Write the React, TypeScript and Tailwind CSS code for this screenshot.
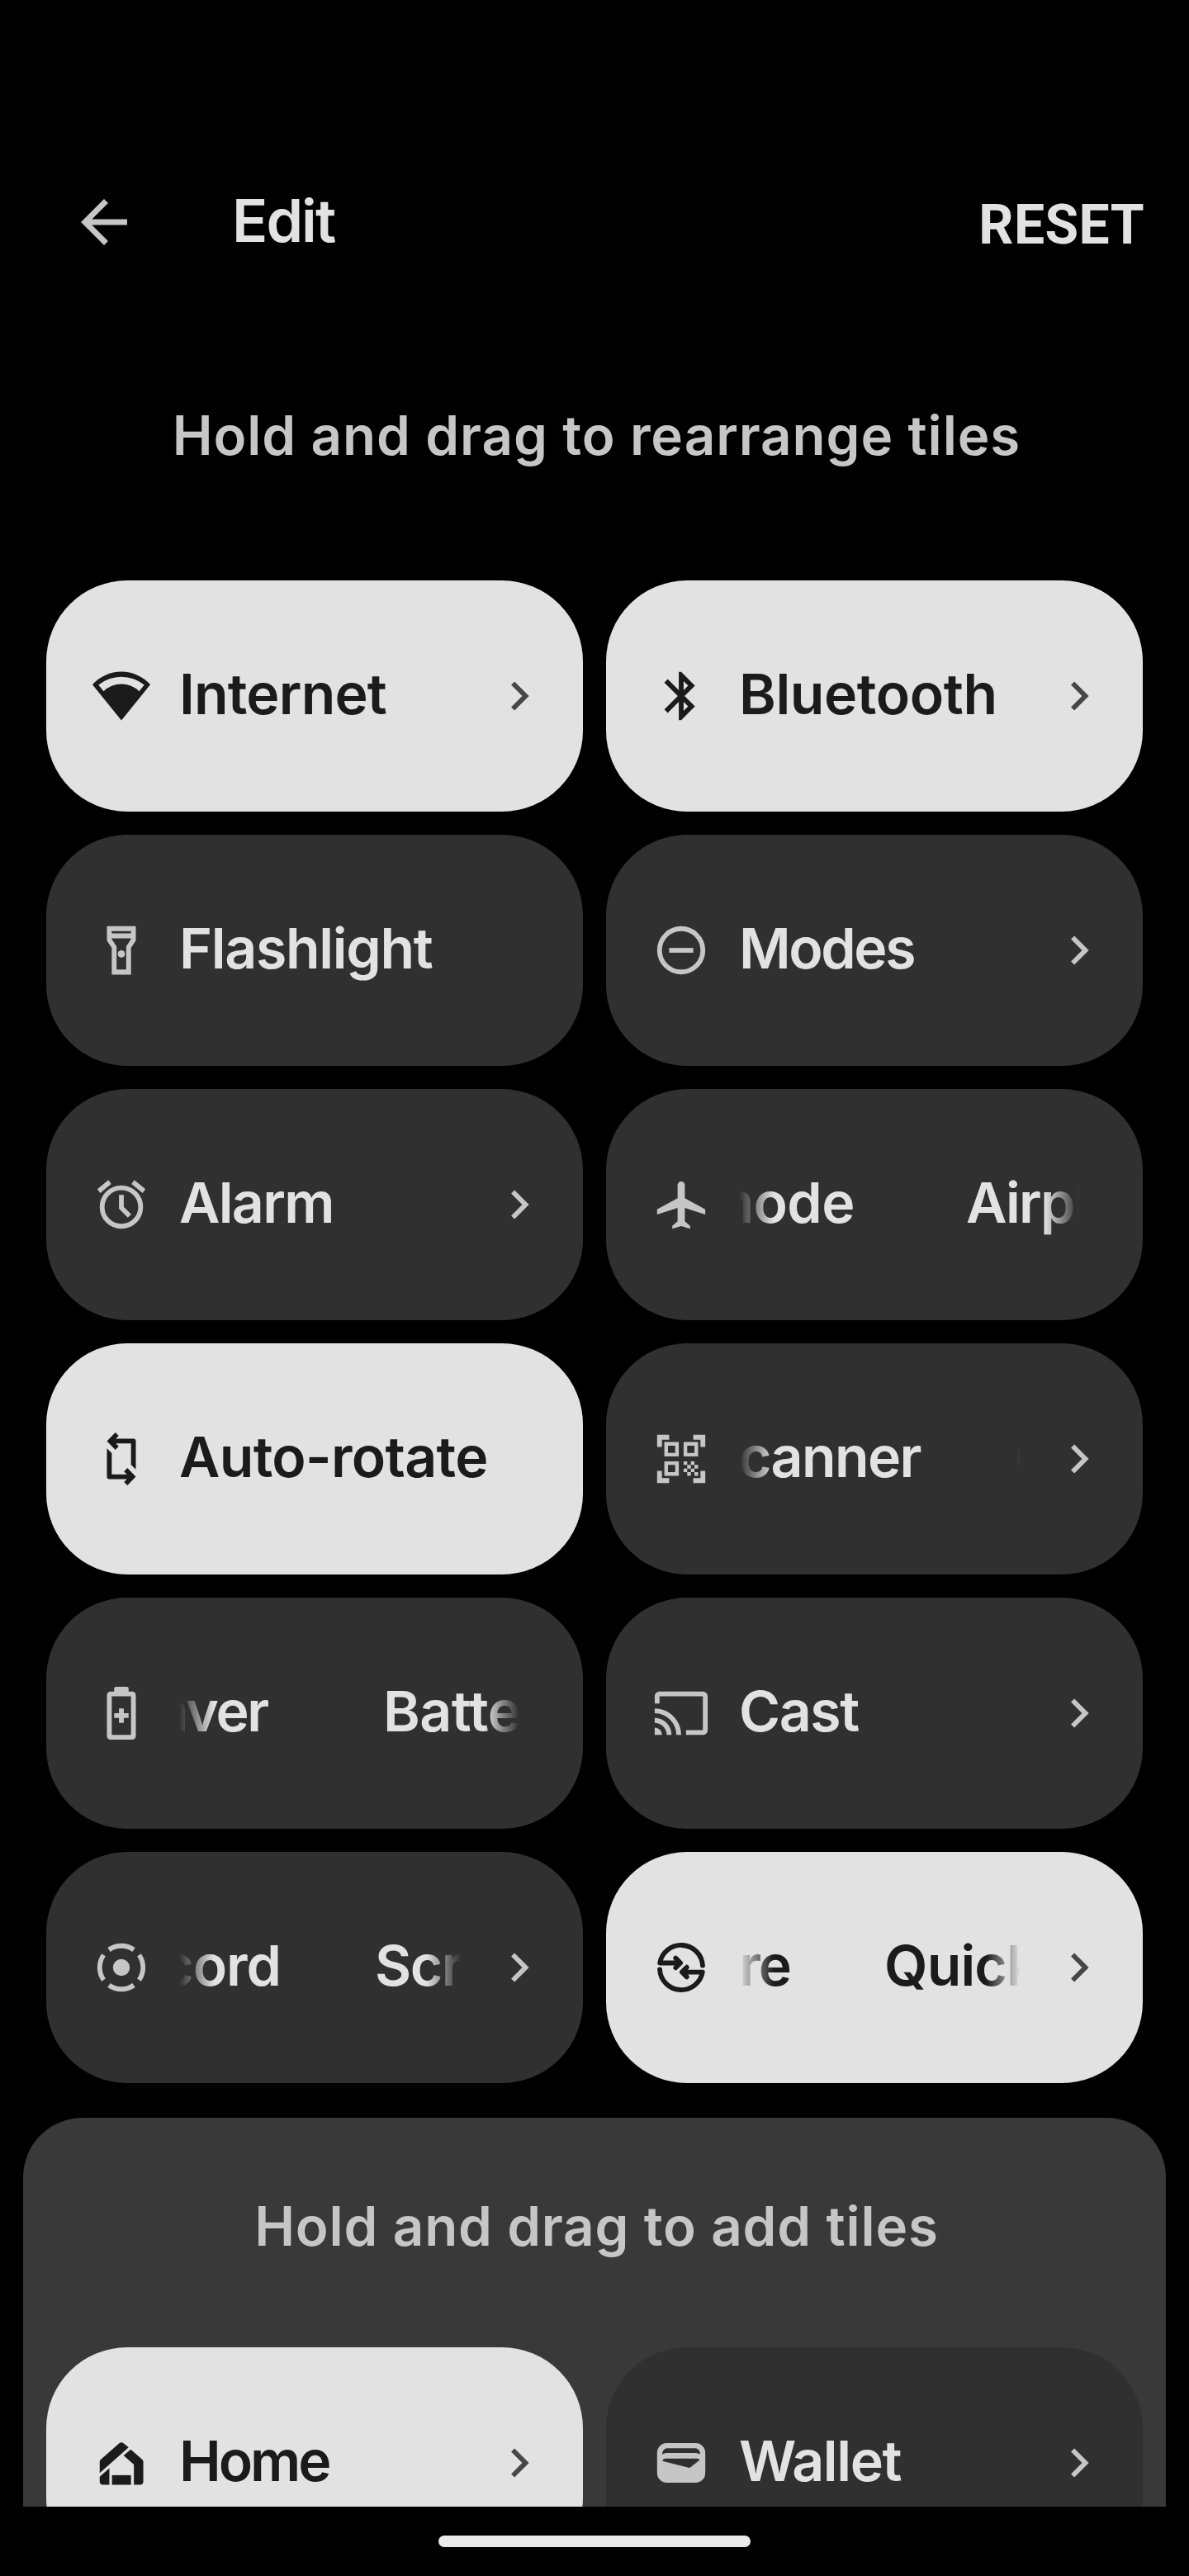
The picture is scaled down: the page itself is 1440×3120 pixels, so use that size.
import type { ReactNode } from "react";
import {
  MdBluetooth,
  MdCast,
  MdChevronRight,
  MdQrCodeScanner,
} from "react-icons/md";

type TileData = {
  icon: ReactNode;
  label: string;
  /** Letter spacing of the label. */
  tracking?: string;
  active?: boolean;
  chevron?: boolean;
  /** Scroll position of a label that is too long for its tile. */
  marquee?: { tail: string; head: string };
};

function Glyph({ children }: { children: ReactNode }) {
  return (
    <svg viewBox="0 0 24 24" fill="currentColor" className="size-full">
      {children}
    </svg>
  );
}

const WifiIcon = () => (
  <Glyph>
    <path
      fillRule="evenodd"
      d="M12 22.1 0 7.3A16 16 0 0 1 24 7.3zM2.5 7.4 4.6 10A10.6 10.6 0 0 1 19.4 10L21.5 7.4A15 15 0 0 0 2.5 7.4z"
    />
  </Glyph>
);

const FlashlightIcon = () => (
  <Glyph>
    <path
      fillRule="evenodd"
      d="M8 22.1V11L6 8V2h12v6l-2 3v11.100zM8 4v1h8V4zM8 7v.4l2 3V20h4v-9.600l2-3V7z"
    />
    <circle cx="12" cy="13.5" r="1.5" />
  </Glyph>
);

const ModesIcon = () => (
  <Glyph>
    <circle cx="12" cy="12" r="9" fill="none" stroke="currentColor" strokeWidth="2" />
    <path d="M7 11h10v2H7z" />
  </Glyph>
);

const AlarmIcon = () => (
  <Glyph>
    <circle cx="12" cy="13" r="8" fill="none" stroke="currentColor" strokeWidth="2" />
    <path d="M2 5.600 6.600 1.800l1.200 1.600-4.600 3.800zM22 5.600 17.400 1.800l-1.200 1.600 4.600 3.800zM11 8h2v4.900l3.100 3.100-1.400 1.400L11 13.700z" />
  </Glyph>
);

const AirplaneIcon = () => (
  <Glyph>
    <path d="M10.500 3.900a1.500 1.500 0 0 1 3 0V9.300L22 14v2.100l-8.500-2.700v5.500l2.200 1.900V22L12 20.900 8.300 22v-1.200l2.200-1.900v-5.500L2 16.100V14l8.500-4.700z" />
  </Glyph>
);

const RotateIcon = () => {
  const half = "M6 4.600 9.500 1l1.400 1.400-1.200 1.200H17a1 1 0 0 1 1 1V16.400L16 14.400V5.600H9.700l1.200 1.200L9.500 8.200z";
  return (
    <Glyph>
      <path d={half} />
      <path d={half} transform="rotate(180 12 12)" />
    </Glyph>
  );
};

const BatteryIcon = () => (
  <Glyph>
    <path
      fillRule="evenodd"
      d="M9 3V1.700a.7.7 0 0 1 .7-.7h4.600a.7.7 0 0 1 .7.7V3h1.500A1.500 1.500 0 0 1 18 4.500v17a1.500 1.500 0 0 1-1.500 1.500h-9A1.500 1.500 0 0 1 6 21.500v-17A1.500 1.500 0 0 1 7.500 3zM8 5v16h8V5z"
    />
    <path d="M11 10h2v2h2v2h-2v2h-2v-2H9v-2h2z" />
  </Glyph>
);

const RecordIcon = () => {
  const arc = "M6.840 4.630A9 9 0 0 1 17.160 4.630";
  return (
    <Glyph>
      <circle cx="12" cy="12" r="3.5" />
      <g fill="none" stroke="currentColor" strokeWidth="2">
        <path d={arc} />
        <path d={arc} transform="rotate(90 12 12)" />
        <path d={arc} transform="rotate(180 12 12)" />
        <path d={arc} transform="rotate(270 12 12)" />
      </g>
    </Glyph>
  );
};

const QuickShareIcon = () => {
  const half = "M20.900 11.200A8.950 8.950 0 0 0 3.150 10.100H11.400M9.700 8.100l2 2-2 2";
  return (
    <Glyph>
      <g fill="none" stroke="currentColor" strokeWidth="2" strokeLinecap="round" strokeLinejoin="round">
        <path d={half} />
        <path d={half} transform="rotate(180 12 12)" />
      </g>
    </Glyph>
  );
};

const HomeIcon = () => (
  <Glyph>
    <path d="M3 11.500q0-.5.4-.9L11 3.900q1-.8 2 0L15 5.600 3 16.200z" />
    <path d="M15.900 6.400 20.700 10.600q.4.4.4.9v8.200q0 1.400-1.400 1.400h-2.500v-8.400L12.900 8.950z" />
    <path d="M7 14.200v6.900H4.400Q3 21.100 3 19.700v-2z" />
    <path d="M8.100 17.100H16v4H8.100z" />
  </Glyph>
);

const WalletIcon = () => (
  <Glyph>
    <path
      fillRule="evenodd"
      d="M6 3.800h12a4 4 0 0 1 4 4v8.400a4 4 0 0 1-4 4H6a4 4 0 0 1-4-4V7.800a4 4 0 0 1 4-4zM6 5.900Q4.300 6.100 4.100 8.500 4.900 7.900 6 7.900h12q1.100 0 1.900.6Q19.700 6.100 18 5.900zM5.200 10.200Q4.600 10.200 4.200 11.200L15 14q.5.100.9-.2l3.800-3q-.4-.6-1-.6z"
    />
  </Glyph>
);

const tiles: TileData[] = [
  { icon: <WifiIcon />, label: "Internet", tracking: "tracking-[-0.8px]", active: true, chevron: true },
  { icon: <MdBluetooth className="size-full" />, label: "Bluetooth", tracking: "tracking-[-0.4px]", active: true, chevron: true },
  { icon: <FlashlightIcon />, label: "Flashlight", tracking: "tracking-[-1.3px]" },
  { icon: <ModesIcon />, label: "Modes", tracking: "tracking-[-2.4px]", chevron: true },
  { icon: <AlarmIcon />, label: "Alarm", tracking: "tracking-[-1.7px]", chevron: true },
  {
    icon: <AirplaneIcon />,
    label: "Airplane mode",
    marquee: { tail: "w-[140px] tracking-[-0.5px]", head: "ml-[135px] tracking-[-1.7px]" },
  },
  { icon: <RotateIcon />, label: "Auto-rotate", tracking: "tracking-[-0.7px]", active: true },
  {
    icon: <MdQrCodeScanner className="size-full" />,
    label: "QR code scanner",
    chevron: true,
    marquee: { tail: "w-[220px] tracking-[-1.6px]", head: "ml-[114px]" },
  },
  {
    icon: <BatteryIcon />,
    label: "Battery Saver",
    marquee: { tail: "w-[107px] tracking-[-2.3px]", head: "ml-[140px] tracking-[-0.6px]" },
  },
  { icon: <MdCast className="size-full" />, label: "Cast", tracking: "tracking-[-1.4px]", chevron: true },
  {
    icon: <RecordIcon />,
    label: "Screen record",
    chevron: true,
    marquee: { tail: "w-[123px] tracking-[-1px]", head: "ml-[114px] tracking-[-1.6px]" },
  },
  {
    icon: <QuickShareIcon />,
    label: "Quick Share",
    active: true,
    chevron: true,
    marquee: { tail: "w-[62px] tracking-[-2px]", head: "ml-[114px] tracking-[-0.9px]" },
  },
];

const availableTiles: TileData[] = [
  { icon: <HomeIcon />, label: "Home", tracking: "tracking-[-3px]", active: true, chevron: true },
  { icon: <WalletIcon />, label: "Wallet", tracking: "tracking-[-1.4px]", chevron: true },
];

function Marquee({ label, tail, head }: { label: string; tail: string; head: string }) {
  return (
    <div className="flex [mask-image:linear-gradient(to_right,transparent,black_42px,black_calc(100%-42px),transparent)]">
      <span className={`flex shrink-0 justify-end ${tail}`}>
        <span>{label}</span>
      </span>
      <span className={`shrink-0 ${head}`}>{label}</span>
    </div>
  );
}

function Tile({ icon, label, tracking = "", active, chevron, marquee }: TileData) {
  const surface = active ? "bg-[#e2e2e2] text-[#1b1b1b]" : "bg-[#303030] text-[#e2e2e2]";
  const iconTone = active ? "text-[#1b1b1b]" : "text-[#c6c6c6]";
  const chevronTone = active ? "text-[#474747]" : "text-[#c6c6c6]";
  return (
    <div className={`flex h-[280px] min-w-0 items-center rounded-[98px] pl-14 ${chevron ? "pr-[42px]" : "pr-[77px]"} ${surface}`}>
      <div className={`size-[70px] shrink-0 ${iconTone}`}>{icon}</div>
      <div className="ml-[35px] min-w-0 flex-1 overflow-hidden pb-[7px] text-[68px] leading-[90px] font-semibold whitespace-nowrap">
        {marquee ? <Marquee label={label} {...marquee} /> : <span className={tracking}>{label}</span>}
      </div>
      {chevron && <MdChevronRight className={`ml-9 size-[70px] shrink-0 ${chevronTone}`} />}
    </div>
  );
}

function Caption({ children, className }: { children: ReactNode; className: string }) {
  return (
    <p className={`flex items-center justify-center pl-[5px] text-[65.5px] leading-none font-semibold whitespace-nowrap text-[#c6c6c6] ${className}`}>
      {children}
    </p>
  );
}

export default function App() {
  return (
    <div className="flex h-[3120px] w-[1440px] flex-col overflow-hidden bg-black font-['Inter',sans-serif]">
      <header className="mt-[185px] flex h-[168px] shrink-0 items-center pr-[54px] pl-[84px]">
        <svg viewBox="0 0 24 24" fill="currentColor" className="size-[84px] text-[#c6c6c6]">
          <path d="m7.825 13 5.600 5.600L12 20l-8-8 8-8 1.425 1.400-5.600 5.600H20v2z" />
        </svg>
        <h1 className="ml-[113px] pb-[3px] text-[71.5px] leading-none font-semibold tracking-[-1.9px] text-[#e2e2e2]">Edit</h1>
        <button className="ml-auto pt-[7px] font-['Roboto',sans-serif] text-[66px] leading-none font-bold tracking-[0.4px] text-[#e2e2e2]">
          RESET
        </button>
      </header>

      <Caption className="h-[350px] shrink-0 pb-px tracking-[0.92px]">Hold and drag to rearrange tiles</Caption>

      <main className="grid shrink-0 grid-cols-2 gap-7 px-14">
        {tiles.map((tile) => (
          <Tile key={tile.label} {...tile} />
        ))}
      </main>

      <section className="mx-7 mt-[42px] h-[471px] shrink-0 overflow-hidden rounded-t-[72px] bg-[#393939]">
        <Caption className="h-[278px] pb-[15px] tracking-[0.85px]">Hold and drag to add tiles</Caption>
        <div className="grid grid-cols-2 gap-7 px-7">
          {availableTiles.map((tile) => (
            <Tile key={tile.label} {...tile} />
          ))}
        </div>
      </section>

      <div className="mt-[35px] h-[14px] w-[378px] shrink-0 self-center rounded-full bg-[#ebebeb]" />
    </div>
  );
}
